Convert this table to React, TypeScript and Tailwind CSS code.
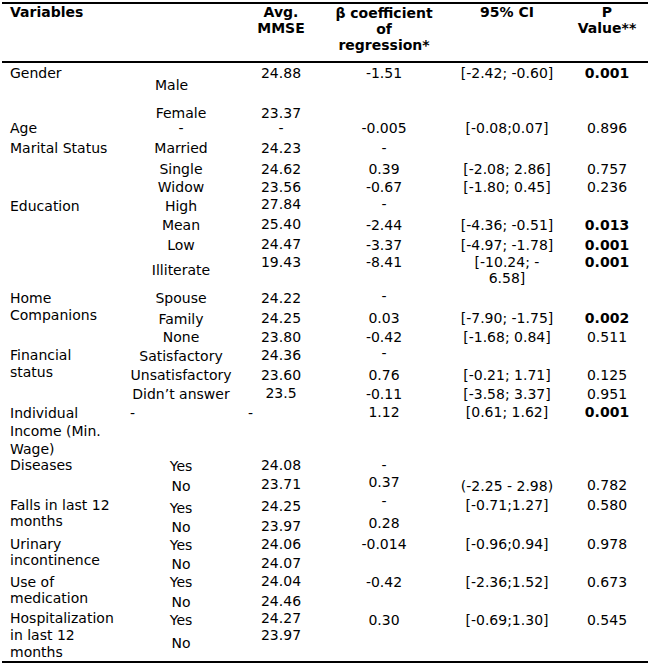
import React from "react";

type Cell = [string, string?];
type Row = { h: string; cells: Cell[] };

// column boxes: 0-130 | 130-232 | 232-330 | 330-438 | 438-576 | 576-638
const COLS = [
  "w-[130px] pl-[10px] text-left",
  "w-[102px] text-center",
  "w-[98px] text-center",
  "w-[108px] text-center",
  "w-[138px] text-center",
  "w-[62px] text-center",
];

const ROWS: Row[] = [
  { h: "h-[40px]", cells: [["Gender", "pt-[2px]"], ["Male", "pt-[14px] !text-left pl-[25px]"], ["24.88", "pt-[2px]"], ["-1.51", "pt-[2px]"], ["[-2.42; -0.60]", "pt-[2px]"], ["0.001", "pt-[2px] font-bold"]] },
  { h: "h-[15px]", cells: [[""], ["Female", "pt-[3px] leading-[15px]"], ["23.37", "pt-[3px] leading-[15px]"], [""], [""], [""]] },
  { h: "h-[20px]", cells: [["Age", "pt-[3px] leading-[15px]"], ["-", "pt-[3px] leading-[15px]"], ["-", "pt-[3px] leading-[15px]"], ["-0.005", "pt-[3px] leading-[15px]"], ["[-0.08;0.07]", "pt-[3px] leading-[15px]"], ["0.896", "pt-[3px] leading-[15px]"]] },
  { h: "h-[21px]", cells: [["Marital Status", "pt-[2px]"], ["Married", "pt-[2px]"], ["24.23", "pt-[2px]"], ["-", "pt-[2px]"], [""], [""]] },
  { h: "h-[18px]", cells: [[""], ["Single", "pt-[2px]"], ["24.62", "pt-[2px]"], ["0.39", "pt-[2px]"], ["[-2.08; 2.86]", "pt-[2px]"], ["0.757", "pt-[2px]"]] },
  { h: "h-[17px]", cells: [[""], ["Widow", "pt-[2px]"], ["23.56", "pt-[2px]"], ["-0.67", "pt-[2px]"], ["[-1.80; 0.45]", "pt-[2px]"], ["0.236", "pt-[2px]"]] },
  { h: "h-[21px]", cells: [["Education", "pt-[4px]"], ["High", "pt-[4px]"], ["27.84", "pt-[2px]"], ["-", "pt-[2px]"], [""], [""]] },
  { h: "h-[20px]", cells: [[""], ["Mean", "pt-[2px]"], ["25.40", "pt-[1px]"], ["-2.44", "pt-[2px]"], ["[-4.36; -0.51]", "pt-[2px]"], ["0.013", "pt-[2px] font-bold"]] },
  { h: "h-[17px]", cells: [[""], ["Low", "pt-[2px]"], ["24.47", "pt-[1px]"], ["-3.37", "pt-[2px]"], ["[-4.97; -1.78]", "pt-[2px]"], ["0.001", "pt-[2px] font-bold"]] },
  { h: "h-[34px]", cells: [[""], ["Illiterate", "pt-[10px]"], ["19.43", "pt-[2px]"], ["-8.41", "pt-[2px]"], ["[-10.24; -\n6.58]", "pt-[2px] leading-[16px]"], ["0.001", "pt-[2px] font-bold"]] },
  { h: "h-[20px]", cells: [["Home\nCompanions", "pt-[4px]"], ["Spouse", "pt-[4px]"], ["24.22", "pt-[4px]"], ["-", "pt-[2px]"], [""], [""]] },
  { h: "h-[21px]", cells: [[""], ["Family", "pt-[5px]"], ["24.25", "pt-[4px]"], ["0.03", "pt-[4px]"], ["[-7.90; -1.75]", "pt-[4px]"], ["0.002", "pt-[4px] font-bold"]] },
  { h: "h-[18px]", cells: [[""], ["None", "pt-[2px]"], ["23.80", "pt-[2px]"], ["-0.42", "pt-[2px]"], ["[-1.68; 0.84]", "pt-[2px]"], ["0.511", "pt-[2px]"]] },
  { h: "h-[20px]", cells: [["Financial\nstatus", "pt-[2px]"], ["Satisfactory", "pt-[3px]"], ["24.36", "pt-[2px]"], ["-", "pt-0"], [""], [""]] },
  { h: "h-[19px]", cells: [[""], ["Unsatisfactory", "pt-[2px]"], ["23.60", "pt-[2px]"], ["0.76", "pt-[2px]"], ["[-0.21; 1.71]", "pt-[2px]"], ["0.125", "pt-[2px]"]] },
  { h: "h-[18px]", cells: [[""], ["Didn’t answer", "pt-[2px]"], ["23.5", "pt-[1px]"], ["-0.11", "pt-[2px]"], ["[-3.58; 3.37]", "pt-[2px]"], ["0.951", "pt-[2px]"]] },
  { h: "h-[53px]", cells: [["Individual\nIncome (Min.\nWage)", "pt-[2px] leading-[18px]"], ["-", "pt-[3px] !text-left"], ["-", "pt-[3px] !text-left pl-[16px]"], ["1.12", "pt-[2px]"], ["[0.61; 1.62]", "pt-[2px]"], ["0.001", "pt-[2px] font-bold"]] },
  { h: "h-[19px]", cells: [["Diseases", "pt-[2px]"], ["Yes", "pt-[3px]"], ["24.08", "pt-[2px]"], ["-", "pt-[2px]"], [""], [""]] },
  { h: "h-[19px]", cells: [[""], ["No", "pt-[4px]"], ["23.71", "pt-[2px]"], ["0.37", "pt-0"], ["(-2.25 - 2.98)", "pt-[4px]"], ["0.782", "pt-[3px]"]] },
  { h: "h-[22px]", cells: [["Falls in last 12\nmonths", "pt-[4px] leading-[16px]"], ["Yes", "pt-[7px]"], ["24.25", "pt-[5px]"], ["-", "pt-0"], ["[-0.71;1.27]", "pt-[4px]"], ["0.580", "pt-[4px]"]] },
  { h: "h-[19px]", cells: [[""], ["No", "pt-[4px]"], ["23.97", "pt-[3px]"], ["0.28", "pt-0"], [""], [""]] },
  { h: "h-[19px]", cells: [["Urinary\nincontinence", "pt-[2px] leading-[16px]"], ["Yes", "pt-[3px]"], ["24.06", "pt-[2px]"], ["-0.014", "pt-[2px]"], ["[-0.96;0.94]", "pt-[2px]"], ["0.978", "pt-[2px]"]] },
  { h: "h-[19px]", cells: [[""], ["No", "pt-[3px]"], ["24.07", "pt-[2px]"], [""], [""], [""]] },
  { h: "h-[19px]", cells: [["Use of\nmedication", "pt-[2px] leading-[16px]"], ["Yes", "pt-[2px]"], ["24.04", "pt-[1px]"], ["-0.42", "pt-[2px]"], ["[-2.36;1.52]", "pt-[2px]"], ["0.673", "pt-[2px]"]] },
  { h: "h-[17px]", cells: [[""], ["No", "pt-[3px]"], ["24.46", "pt-[2px]"], [""], [""], [""]] },
  { h: "h-[17px]", cells: [["Hospitalization\nin last 12\nmonths", "pt-[2px]"], ["Yes", "pt-[4px]"], ["24.27", "pt-[2px]"], ["0.30", "pt-[4px]"], ["[-0.69;1.30]", "pt-[4px]"], ["0.545", "pt-[4px]"]] },
  { h: "h-[36px]", cells: [[""], ["No", "pt-[10px]"], ["23.97", "pt-[2px]"], [""], [""], [""]] },
];

function HeaderCell({ col, lines, pt }: { col: number; lines: string[]; pt: string }) {
  const centered = col > 0;
  return (
    <div className={`${COLS[col]} ${pt} flex flex-col ${centered ? "items-center" : "items-start"} font-bold leading-[16px] whitespace-nowrap`}>
      {lines.map((l, i) => (
        <span key={i}>{l}</span>
      ))}
    </div>
  );
}

export default function App() {
  return (
    <div className="w-[650px] h-[666px] bg-white text-black text-[14px] leading-[17px] font-['DejaVu_Sans',Verdana,sans-serif] pt-[2px]">
      <div className="mx-[2px] h-[2px] bg-black" />
      <div className="flex h-[57px]">
        <HeaderCell col={0} lines={["Variables"]} pt="pt-0" />
        <div className={COLS[1]} />
        <HeaderCell col={2} lines={["Avg.", "MMSE"]} pt="pt-0" />
        <HeaderCell col={3} lines={["β coefficient", "of", "regression*"]} pt="pt-[1px]" />
        <HeaderCell col={4} lines={["95% CI"]} pt="pt-0" />
        <HeaderCell col={5} lines={["P", "Value**"]} pt="pt-0" />
      </div>
      <div className="mx-[2px] h-[2px] bg-black" />
      <div className="flex flex-col">
        {ROWS.map((row, ri) => (
          <div key={ri} className={`flex ${row.h}`}>
            {row.cells.map(([text, cls], ci) => (
              <div key={ci} className={`${COLS[ci]} ${cls ?? ""} whitespace-pre`}>
                {text}
              </div>
            ))}
          </div>
        ))}
      </div>
      <div className="mx-[2px] h-[2px] bg-black" />
    </div>
  );
}
